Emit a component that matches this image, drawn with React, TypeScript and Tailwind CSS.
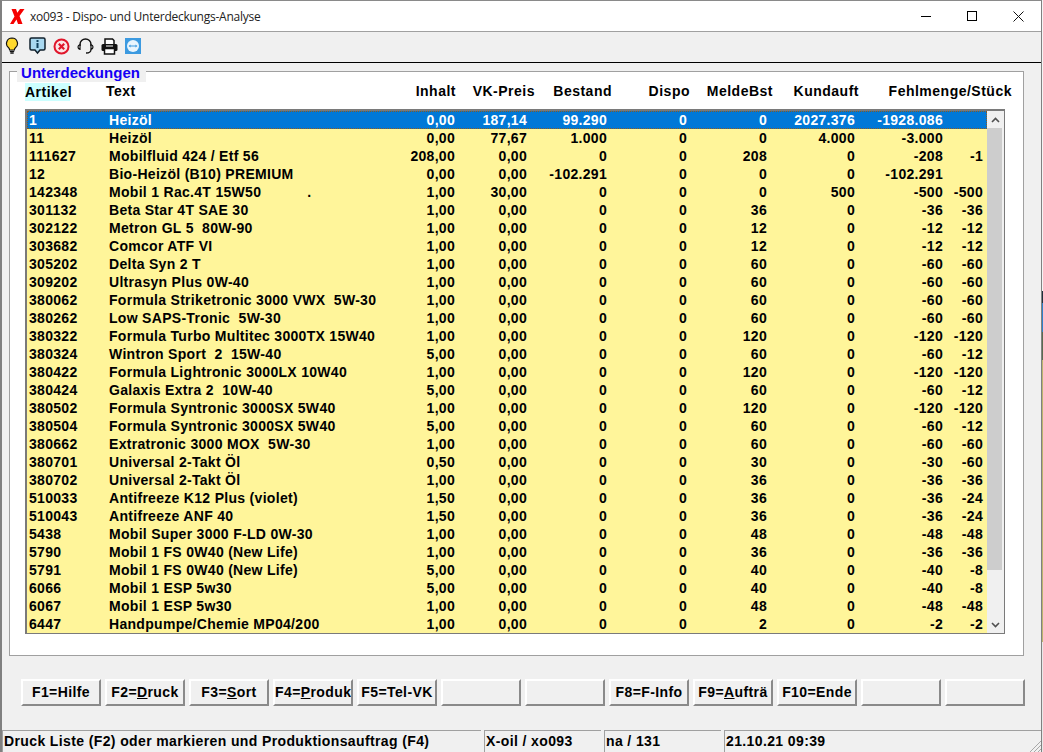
import React from 'react';

type Row = [string, string, string, string, string, string, string, string, string, string];

const rows: Row[] = [
  ['1', 'Heizöl', '0,00', '187,14', '99.290', '0', '0', '2027.376', '-1928.086', ''],
  ['11', 'Heizöl', '0,00', '77,67', '1.000', '0', '0', '4.000', '-3.000', ''],
  ['111627', 'Mobilfluid 424 / Etf 56', '208,00', '0,00', '0', '0', '208', '0', '-208', '-1'],
  ['12', 'Bio-Heizöl (B10) PREMIUM', '0,00', '0,00', '-102.291', '0', '0', '0', '-102.291', ''],
  ['142348', 'Mobil 1 Rac.4T 15W50           .', '1,00', '30,00', '0', '0', '0', '500', '-500', '-500'],
  ['301132', 'Beta Star 4T SAE 30', '1,00', '0,00', '0', '0', '36', '0', '-36', '-36'],
  ['302122', 'Metron GL 5  80W-90', '1,00', '0,00', '0', '0', '12', '0', '-12', '-12'],
  ['303682', 'Comcor ATF VI', '1,00', '0,00', '0', '0', '12', '0', '-12', '-12'],
  ['305202', 'Delta Syn 2 T', '1,00', '0,00', '0', '0', '60', '0', '-60', '-60'],
  ['309202', 'Ultrasyn Plus 0W-40', '1,00', '0,00', '0', '0', '60', '0', '-60', '-60'],
  ['380062', 'Formula Striketronic 3000 VWX  5W-30', '1,00', '0,00', '0', '0', '60', '0', '-60', '-60'],
  ['380262', 'Low SAPS-Tronic  5W-30', '1,00', '0,00', '0', '0', '60', '0', '-60', '-60'],
  ['380322', 'Formula Turbo Multitec 3000TX 15W40', '1,00', '0,00', '0', '0', '120', '0', '-120', '-120'],
  ['380324', 'Wintron Sport  2  15W-40', '5,00', '0,00', '0', '0', '60', '0', '-60', '-12'],
  ['380422', 'Formula Lightronic 3000LX 10W40', '1,00', '0,00', '0', '0', '120', '0', '-120', '-120'],
  ['380424', 'Galaxis Extra 2  10W-40', '5,00', '0,00', '0', '0', '60', '0', '-60', '-12'],
  ['380502', 'Formula Syntronic 3000SX 5W40', '1,00', '0,00', '0', '0', '120', '0', '-120', '-120'],
  ['380504', 'Formula Syntronic 3000SX 5W40', '5,00', '0,00', '0', '0', '60', '0', '-60', '-12'],
  ['380662', 'Extratronic 3000 MOX  5W-30', '1,00', '0,00', '0', '0', '60', '0', '-60', '-60'],
  ['380701', 'Universal 2-Takt Öl', '0,50', '0,00', '0', '0', '30', '0', '-30', '-60'],
  ['380702', 'Universal 2-Takt Öl', '1,00', '0,00', '0', '0', '36', '0', '-36', '-36'],
  ['510033', 'Antifreeze K12 Plus (violet)', '1,50', '0,00', '0', '0', '36', '0', '-36', '-24'],
  ['510043', 'Antifreeze ANF 40', '1,50', '0,00', '0', '0', '36', '0', '-36', '-24'],
  ['5438', 'Mobil Super 3000 F-LD 0W-30', '1,00', '0,00', '0', '0', '48', '0', '-48', '-48'],
  ['5790', 'Mobil 1 FS 0W40 (New Life)', '1,00', '0,00', '0', '0', '36', '0', '-36', '-36'],
  ['5791', 'Mobil 1 FS 0W40 (New Life)', '5,00', '0,00', '0', '0', '40', '0', '-40', '-8'],
  ['6066', 'Mobil 1 ESP 5w30', '5,00', '0,00', '0', '0', '40', '0', '-40', '-8'],
  ['6067', 'Mobil 1 ESP 5w30', '1,00', '0,00', '0', '0', '48', '0', '-48', '-48'],
  ['6447', 'Handpumpe/Chemie MP04/200', '1,00', '0,00', '0', '0', '2', '0', '-2', '-2'],
];

const rowGrid = 'grid grid-cols-[80px_269px_79px_72px_80px_80px_80px_88px_88px_40px_4px] h-[18px] leading-[19px] items-start';

const FKey = ({ pre, u, post }: { pre?: string; u?: string; post?: string }) => (
  <button className="w-[80px] h-[27px] shrink-0 overflow-hidden whitespace-nowrap bg-[#f0f0f0] border-2 border-t-white border-l-white border-r-[#8a8a8a] border-b-[#8a8a8a] text-center text-[14px] font-bold tracking-[0.4px] text-black">
    {pre}
    {u && <span className="underline">{u}</span>}
    {post}
  </button>
);

const Status = ({ w, text, grow }: { w?: string; text?: string; grow?: boolean }) => (
  <div className={`h-full border-l border-t border-[#a0a0a0] pl-[1px] flex items-center text-[14px] font-bold tracking-[0.38px] whitespace-pre ${w ?? ''} ${grow ? 'flex-1' : ''}`}>
    {text}
  </div>
);

const Bulb = () => (
  <svg width="14" height="18" viewBox="0 0 14 18">
    <path d="M7 1a5.5 5.5 0 0 0-3.4 9.8c.7.6 1 1.2 1 2.2h4.8c0-1 .3-1.6 1-2.2A5.5 5.5 0 0 0 7 1z" fill="#ffd92e" stroke="#111" strokeWidth="1.2" />
    <path d="M4.8 14.3h4.4M5.3 16h3.4" stroke="#111" strokeWidth="1.3" />
  </svg>
);

const InfoBubble = () => (
  <svg width="17" height="18" viewBox="0 0 17 18">
    <path d="M2.5 1h12A1.5 1.5 0 0 1 16 2.500v9a1.500 1.500 0 0 1-1.500 1.500H11l-2.500 3L6 13H2.500A1.500 1.500 0 0 1 1 11.500v-9A1.500 1.500 0 0 1 2.500 1z" fill="#a8d8f0" stroke="#10202c" strokeWidth="1.5" />
    <rect x="7.500" y="3" width="2" height="2" fill="#10405c" />
    <rect x="7.500" y="6" width="2" height="5" fill="#10405c" />
  </svg>
);

const CloseCircle = () => (
  <svg width="17" height="17" viewBox="0 0 17 17">
    <circle cx="8.500" cy="8.500" r="7" fill="#fbe4e6" stroke="#e0162b" strokeWidth="2" />
    <path d="M5.800 5.800l5.400 5.400M11.200 5.800l-5.400 5.400" stroke="#e0162b" strokeWidth="2.200" />
  </svg>
);

const Headset = () => (
  <svg width="17" height="17" viewBox="0 0 17 17" fill="none">
    <path d="M3 8V6.500a5.500 5.500 0 0 1 11 0V8" stroke="#111" strokeWidth="1.400" />
    <path d="M3 6.500C1.500 7 1 8 1 9s.7 2 2 2.300zM14 6.500c1.500.5 2 1.500 2 2.500s-.7 2-2 2.300z" stroke="#111" strokeWidth="1.200" fill="#fff" />
    <path d="M14 11.500c0 2.500-2.500 3.500-5 3.500" stroke="#111" strokeWidth="1.300" />
  </svg>
);

const Printer = () => (
  <svg width="17" height="17" viewBox="0 0 17 17">
    <path d="M4 1h7.500L13 2.500V7H4z" fill="#fff" stroke="#111" strokeWidth="1.500" />
    <rect x="0.500" y="6" width="16" height="7" rx="1.500" fill="#111" />
    <rect x="3.500" y="10.500" width="10" height="5.500" fill="#fff" stroke="#111" strokeWidth="1.500" />
    <path d="M5 8h7" stroke="#fff" strokeWidth="1" />
  </svg>
);

const TeamViewer = () => (
  <svg width="16" height="16" viewBox="0 0 16 16">
    <rect width="16" height="16" fill="#3c9ae0" />
    <circle cx="8" cy="8" r="6" fill="#eaf5fd" />
    <path d="M3.500 8l2-1.500v1h5v-1l2 1.500-2 1.500v-1h-5v1z" fill="#3c9ae0" />
  </svg>
);

export default function App() {
  return (
    <div className="w-[1043px] h-[752px] overflow-hidden flex bg-white font-['Liberation_Sans',Arial,sans-serif] text-black">
      <div className="w-[1042px] h-full flex flex-col border-t border-t-[#8a8a8a] border-l-2 border-l-[#808080] border-r border-r-[#808080] bg-[#f0f0f0]">
        {/* title bar */}
        <div className="h-[31px] shrink-0 flex items-center bg-white border-b border-[#a0a0a0]">
          <svg width="15" height="15" viewBox="0 0 15 15" className="ml-[8px]">
            <path d="M1.500 0H6l1.300 3.800L10 0h4.500L9.500 7l3 8H8L6.500 10.500 3.500 15H0l4.500-7.500z" fill="#f50000" />
          </svg>
          <span className="ml-[5px] pt-[1px] text-[12px] tracking-[-0.25px] font-['Open_Sans',sans-serif] text-[#222] whitespace-pre">xo093 - Dispo- und Unterdeckungs-Analyse</span>
          <div className="ml-auto flex h-full">
            <div className="w-[46px] flex items-center justify-center">
              <div className="w-[10px] h-px bg-black" />
            </div>
            <div className="w-[46px] flex items-center justify-center">
              <div className="w-[10px] h-[10px] border border-black" />
            </div>
            <div className="w-[46px] flex items-center justify-center">
              <svg width="11" height="11" viewBox="0 0 11 11">
                <path d="M.5.500l10 10M10.500.500l-10 10" stroke="#111" strokeWidth="1" />
              </svg>
            </div>
          </div>
        </div>

        {/* toolbar */}
        <div className="h-[31px] shrink-0 flex items-center pl-[3px] pb-[2px] gap-[7px] border-b border-black">
          <Bulb />
          <div className="ml-[3px]"><InfoBubble /></div>
          <CloseCircle />
          <Headset />
          <Printer />
          <TeamViewer />
        </div>

        {/* group box */}
        <div className="relative h-[585px] shrink-0 mt-[8px] ml-[7px] mr-[17px] bg-white border border-[#a0a0a0]">
          <div className="absolute -top-[7px] left-[7px] w-[129px] h-[17px] bg-[#f0f0f0] pl-[4px] text-[15px] leading-[16px] font-bold tracking-[0.05px] text-[#1400f5]">
            Unterdeckungen
          </div>

          <div className="mt-[9px] ml-[15px] grid grid-cols-[81px_100px_250px_79px_77px_78px_83px_86px_153px] h-[18px] items-center text-[14px] font-bold tracking-[0.5px] text-right">
            <div className="w-[45px] h-[18px] bg-[#ccffff] text-left leading-[18px]">Artikel</div>
            <div className="text-left">Text</div>
            <div>Inhalt</div>
            <div>VK-Preis</div>
            <div>Bestand</div>
            <div>Dispo</div>
            <div>MeldeBst</div>
            <div>Kundauft</div>
            <div>Fehlmenge/Stück</div>
          </div>

          {/* list */}
          <div className="mt-[10px] ml-[15px] w-[980px] h-[525px] flex border-l-2 border-t-2 border-[#7a7a7a] border-r border-b border-r-[#7a7a7a] border-b-[#7a7a7a] bg-[#fff59a]">
            <div className="w-[960px] shrink-0 text-[14px] font-bold tracking-[0.3px]">
              {rows.map((r, i) => (
                <div
                  key={r[0]}
                  className={`${rowGrid} whitespace-pre ${i === 0 ? 'bg-[#0078d7] text-white outline-1 -outline-offset-1 outline-dotted outline-[#8a5a20]' : ''}`}
                >
                  <div className="pl-[2px]">{r[0]}</div>
                  <div className="pl-[2px] overflow-hidden">{r[1]}</div>
                  {r.slice(2).map((c, j) => (
                    <div key={j} className="text-right">{c}</div>
                  ))}
                </div>
              ))}
            </div>
            {/* scrollbar */}
            <div className="w-[17px] shrink-0 h-full flex flex-col bg-[#f0f0f0]">
              <div className="h-[17px] flex items-center justify-center">
                <svg width="9" height="6" viewBox="0 0 9 6" fill="none">
                  <path d="M1 5l3.500-3.500L8 5" stroke="#505050" strokeWidth="1.600" />
                </svg>
              </div>
              <div className="h-[442px] mr-[2px] bg-[#cdcdcd]" />
              <div className="mt-auto h-[17px] flex items-center justify-center">
                <svg width="9" height="6" viewBox="0 0 9 6" fill="none">
                  <path d="M1 1l3.500 3.500L8 1" stroke="#505050" strokeWidth="1.600" />
                </svg>
              </div>
            </div>
          </div>
        </div>

        {/* function keys */}
        <div className="mt-[23px] ml-[19px] flex gap-[4px] shrink-0">
          <FKey pre="F1=Hilfe" />
          <FKey pre="F2=" u="D" post="ruck" />
          <FKey pre="F3=" u="S" post="ort" />
          <FKey pre="F4=" u="P" post="roduk" />
          <FKey pre="F5=Tel-VK" />
          <FKey />
          <FKey />
          <FKey pre="F8=F-Info" />
          <FKey pre="F9=" u="A" post="ufträ" />
          <FKey pre="F10=Ende" />
          <FKey />
          <FKey />
        </div>

        {/* status bar */}
        <div className="relative mt-[24px] flex-1 flex gap-[3px] min-h-0">
          <Status w="w-[479px]" text="Druck Liste (F2) oder markieren und Produktionsauftrag (F4)" />
          <Status w="w-[117px]" text="X-oil / xo093" />
          <Status w="w-[117px]" text="na / 131" />
          <Status grow text="21.10.21 09:39" />
          <svg width="12" height="12" viewBox="0 0 12 12" className="absolute right-0 bottom-0">
            <path d="M12 1L1 12M12 5l-7 7M12 9l-3 3" stroke="#a8a8a8" strokeWidth="1" />
          </svg>
        </div>
      </div>
      {/* sliver of the desktop behind the window */}
      <div className="w-[1px] h-full flex flex-col bg-white">
        <div className="h-[291px] bg-[#f4f4f4]" />
        <div className="h-[12px] bg-[#20303c]" />
        <div className="h-[29px] bg-[#2f80c8]" />
        <div className="h-[28px] bg-[#5a6a50]" />
        <div className="h-[282px] bg-[#bdb56e]" />
        <div className="flex-1 bg-[#e8e8e8]" />
      </div>
    </div>
  );
}
